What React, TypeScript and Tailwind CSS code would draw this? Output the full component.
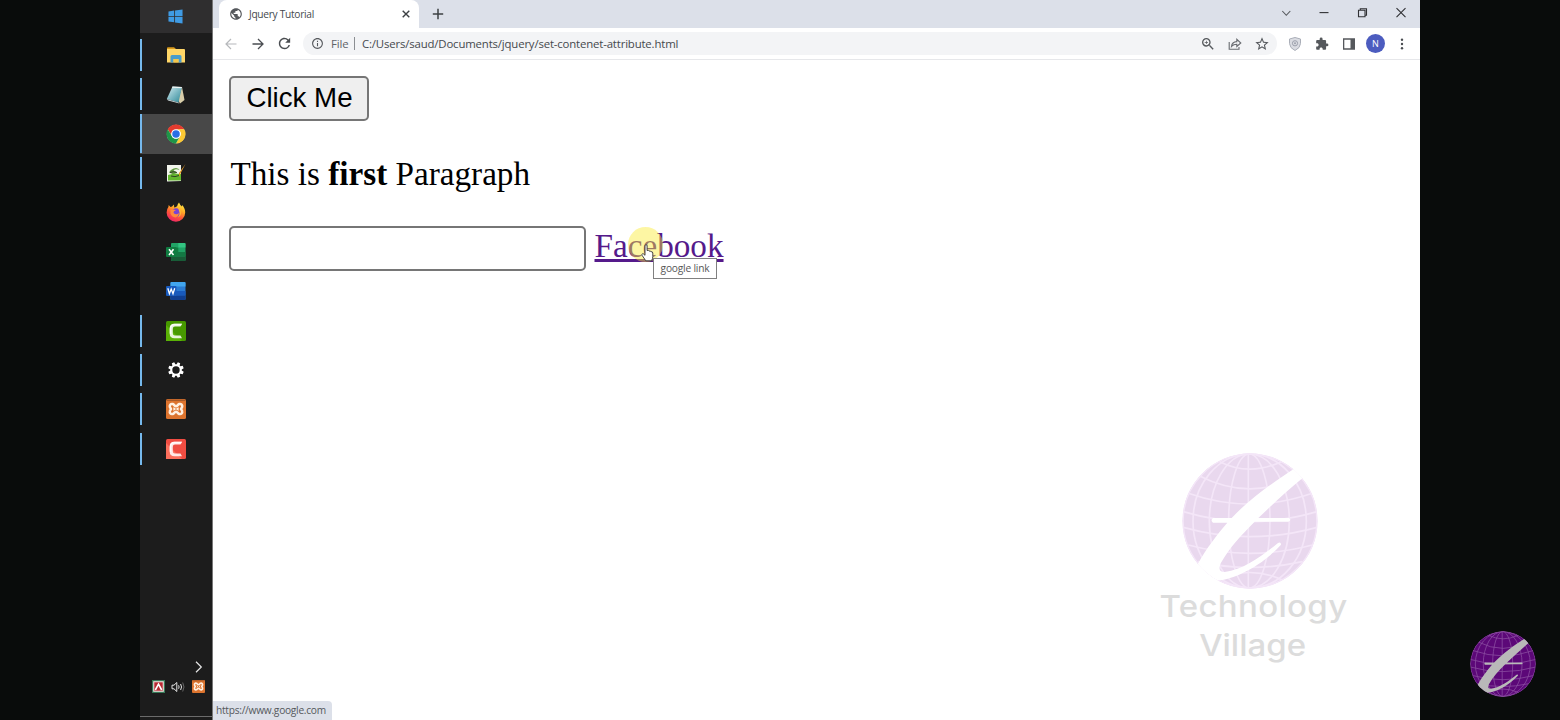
import React from "react";
import { MdZoomIn, MdExtension, MdStarBorder, MdInfoOutline, MdRefresh, MdPublic } from "react-icons/md";

const Windows = () => (
  <svg viewBox="0 0 16 16" className="h-[15px] w-[15px]" fill="#3f9be4">
    <path d="M0.5 2.6 6.6 1.7V7.4H0.5zM7.5 1.5 15.5.4V7.4H7.5zM.5 8.3H6.6V14.2L.5 13.3zM7.5 8.3H15.5V15.5L7.5 14.4z" />
  </svg>
);

const Folder = () => (
  <svg viewBox="0 0 20 20" className="h-5 w-5">
    <path d="M1 3.2Q1 2.2 2 2.2H8L10 4H1z" fill="#d99a1c" />
    <path d="M1 4h17q1 0 1 1v12.5H1z" fill="#ffd667" />
    <path d="M4.500 17.500V11.500q0-1.500 1.500-1.500h8q1.500 0 1.500 1.500v6h-3V14H7.500v3.500z" fill="#4a9ccb" />
    <path d="M7.500 17.500V14h5v3.500z" fill="#f4c64c" />
  </svg>
);

const Notes = () => (
  <svg viewBox="0 0 20 20" className="mt-px h-5 w-5">
    <defs>
      <linearGradient id="notes" x1="0" y1="0" x2="1" y2="1">
        <stop offset="0" stopColor="#d8eef2" />
        <stop offset=".5" stopColor="#7db9c4" />
        <stop offset="1" stopColor="#2d8796" />
      </linearGradient>
    </defs>
    <path d="M16 2 18.500 15 14 18.500 12 15z" fill="#d8cda9" />
    <path d="M6.500 1.500 16 2 12.500 17.500.8 14z" fill="url(#notes)" />
    <path d="M.8 14 12.500 17.500 13.500 18.500 2 15.500z" fill="#c9d5d6" />
    <path d="M6.500 1.500 16 2l-.3 1.300-9.800-.6z" fill="#edf3f2" />
  </svg>
);

const Chrome = () => (
  <svg viewBox="0 0 48 48" className="h-[20px] w-[20px]">
    <circle cx="24" cy="24" r="22" fill="#fff" />
    <path d="M4.100 12.500A23 23 0 0 1 43.900 12.500L24 13.500A11 11 0 0 0 14.500 29.500z" fill="#e33b2e" />
    <path d="M43.900 12.500A23 23 0 0 1 24 47L33.500 29.500A11 11 0 0 0 24 12.500z" fill="#fcc934" />
    <path d="M4.100 12.500A23 23 0 0 0 24 47L33.500 29.500A11 11 0 0 1 14.500 29.500z" fill="#1e9648" />
    <circle cx="24" cy="24" r="11.500" fill="#fff" />
    <circle cx="24" cy="24" r="9" fill="#2a6fe6" />
  </svg>
);

const NotepadPP = () => (
  <svg viewBox="0 0 20 20" className="h-5 w-5">
    <path d="M1 2h14v16L1 18.500z" fill="#f2f4ec" />
    <path d="M2 12q6-2 13-1v6.500H2z" fill="#63b72e" />
    <path d="M3 9.500q2-4 7-4.500 3 .500 3.500 2-4-1.500-6 .500 3 .5 3.500 2.500-3 1.500-4.500 1z" fill="#5f9a3c" />
    <path d="M4 9.500q3-1.500 7 0M5 13q4 1.500 8-.5" stroke="#222" strokeWidth=".8" fill="none" />
    <path d="M19.500 1 15 9.500 13 14 13 10z" fill="#e49b28" />
  </svg>
);

const Firefox = () => (
  <svg viewBox="0 0 20 20" className="-mt-px h-5 w-5">
    <defs>
      <linearGradient id="fox" x1=".8" y1="0" x2=".3" y2="1">
        <stop offset="0" stopColor="#fff04a" />
        <stop offset=".35" stopColor="#ffae26" />
        <stop offset=".65" stopColor="#ff5638" />
        <stop offset="1" stopColor="#ed226a" />
      </linearGradient>
    </defs>
    <path d="M13 .5q1 2.500 2.800 4 .2-1 .2-1.500 3.200 3 3.200 7.500a9.300 9.300 0 0 1-18.600 0Q.600 7 2.400 5l.3-2 1.800 2 1.500-.4L8 2.500l.2 3q2-.2 3-1.500Q11.500 2 13 .5z" fill="url(#fox)" />
    <circle cx="10.200" cy="10.500" r="4.300" fill="#7a42d4" />
    <path d="M4.500 8q3-1 5.500.5-2.500.2-2.500 2 .5 2 3 1.800 1.800-.3 2.500-1.300-.2 3.500-3.500 4.500-4-.500-5-4z" fill="#ff8a3b" />
    <path d="M12 5.500q4 2 3 6.500-.7 3-3 3.500 2-2 1.500-5z" fill="#ffb632" />
  </svg>
);

const Excel = () => (
  <svg viewBox="0 0 20 20" className="h-5 w-5">
    <rect x="5" y="1" width="14.500" height="18" rx="1" fill="#21a366" />
    <path d="M5 5.500h7.300V10H5z" fill="#107c41" />
    <path d="M12.300 1h6.200q1 0 1 1v3.500h-7.200z" fill="#33c481" />
    <path d="M5 10h14.500v4.500H5z" fill="#137843" />
    <path d="M5 14.500h14.500V18q0 1-1 1H6q-1 0-1-1z" fill="#185c37" />
    <rect x="0" y="5" width="10.500" height="10" rx="1" fill="#107c41" />
    <path d="M3 7.300 7.500 12.900M7.500 7.300 3 12.900" stroke="#fff" strokeWidth="1.600" />
  </svg>
);

const Word = () => (
  <svg viewBox="0 0 20 20" className="h-5 w-5">
    <rect x="4.500" y="1" width="15" height="18" rx="1" fill="#2b7cd3" />
    <path d="M5.500 1h13q1 0 1 1v3.500h-15V2q0-1 1-1z" fill="#41a5ee" />
    <path d="M4.500 10h15v4.500h-15z" fill="#185abd" />
    <path d="M4.500 14.500h15V18q0 1-1 1h-13q-1 0-1-1z" fill="#103f91" />
    <rect x="0" y="5" width="10.500" height="10" rx="1" fill="#185abd" />
    <path d="M1.800 7.300 3.400 12.700 5.200 8 7 12.700 8.700 7.300" stroke="#fff" strokeWidth="1.300" fill="none" />
  </svg>
);

const CamGlyph = () => (
  <>
    <path d="M16 2.800 14.500 5.500H9Q6.800 5.500 6.800 7.700v4.600q0 2.200 2.200 2.200h5.500L16 17.200H8.500q-4.800 0-4.800-4.700v-5q0-4.700 4.800-4.700z" fill="#fff" opacity=".85" />
    <path d="M16 2.800H8.500Q3.700 2.800 3.700 7.500v5l1.500 1V8q0-3.500 3.300-3.500h6.700z" fill="#fff" opacity=".8" />
  </>
);

const CamGreen = () => (
  <svg viewBox="0 0 20 20" className="h-5 w-5">
    <rect width="20" height="20" rx="1.500" fill="#479900" />
    <path d="M0 20V4L16 20z" fill="#5ab206" />
    <CamGlyph />
  </svg>
);

const CamRed = () => (
  <svg viewBox="0 0 20 20" className="h-5 w-5">
    <rect width="20" height="20" rx="1.500" fill="#f04d42" />
    <path d="M0 20V4L16 20z" fill="#fb6f5c" />
    <CamGlyph />
  </svg>
);

const TEETH = [0, 45, 90, 135, 180, 225, 270, 315];

const Gear = () => (
  <svg viewBox="0 0 20 20" className="-ml-px h-5 w-5">
    <g transform="rotate(22.5 10 10)">
      {TEETH.map((a) => (
        <path key={a} d="M8.200 5.500 8.700 2.200h2.600L11.800 5.500z" fill="#fff" transform={`rotate(${a} 10 10)`} />
      ))}
    </g>
    <circle cx="10" cy="10" r="4.700" fill="none" stroke="#fff" strokeWidth="2" />
  </svg>
);

const Xampp = ({ small = false }: { small?: boolean }) => (
  <svg viewBox="0 0 20 20" className={small ? "h-[13px] w-[13px]" : "h-5 w-5"}>
    <rect width="20" height="20" rx="1.500" fill="#dd742e" />
    <rect x=".5" y=".5" width="19" height="1.500" rx=".7" fill="#a95a28" />
    <path
      d="M6.800 5C4.500 4.500 3.500 6 3.800 7.600 4 9 5 9.400 5 10s-1 1-1.200 2.400C3.500 14 4.500 15.500 6.800 15 8.200 14.600 8.400 12.800 10 12.800s1.800 1.800 3.200 2.200c2.300.5 3.300-1 3-2.600C16 11 15 10.600 15 10s1-1 1.200-2.400c.3-1.600-.7-3.100-3-2.600C11.800 5.400 11.600 7.200 10 7.200S8.200 5.400 6.800 5z"
      fill="none"
      stroke="#fff0e2"
      strokeWidth="2.500"
    />
    <path d="M7.300 8.800 9 10 7.300 11.200M12.700 8.800 11 10 12.700 11.200" fill="none" stroke="#fff0e2" strokeWidth="1.400" />
  </svg>
);

const ITEMS: { name: string; icon: React.ReactNode; open?: boolean; active?: boolean }[] = [
  { name: "explorer", icon: <Folder />, open: true },
  { name: "notes", icon: <Notes />, open: true },
  { name: "chrome", icon: <Chrome />, open: true, active: true },
  { name: "editor", icon: <NotepadPP />, open: true },
  { name: "firefox", icon: <Firefox /> },
  { name: "excel", icon: <Excel /> },
  { name: "word", icon: <Word /> },
  { name: "camtasia", icon: <CamGreen />, open: true },
  { name: "settings", icon: <Gear />, open: true },
  { name: "xampp", icon: <Xampp />, open: true },
  { name: "recorder", icon: <CamRed />, open: true },
];

function Taskbar() {
  return (
    <aside className="flex w-[73px] shrink-0 flex-col border-r border-[#777] bg-[#1c1c1c]">
      <div className="flex h-[33px] shrink-0 items-center justify-center bg-[#2f2e2f] pr-px">
        <Windows />
      </div>
      <div className="mt-[2.400px] flex flex-col">
        {ITEMS.map((it) => (
          <div key={it.name} className={`flex h-[39.380px] items-center ${it.active ? "bg-[#484848]" : ""}`}>
            <div className={`w-[2px] ${it.active ? "h-[39px]" : "h-8"} ${it.open ? "bg-[#76b9ed]" : ""}`} />
            <div className="flex flex-1 justify-center pr-[2px]">{it.icon}</div>
          </div>
        ))}
      </div>
      <div className="mt-auto flex flex-col pb-[3px]">
        <svg viewBox="0 0 8 12" className="ml-[55px] h-3 w-2" fill="none" stroke="#e6e6e6" strokeWidth="1.200">
          <path d="M1 .8 6.300 6 1 11.200" />
        </svg>
        <div className="mt-[7px] mb-[23px] flex items-center pl-3">
          <svg viewBox="0 0 13 13" className="h-[13px] w-[13px]">
            <rect width="13" height="13" fill="#367a58" />
            <rect x="1.200" y="1.200" width="10.600" height="10.600" fill="#f0dedd" />
            <rect x="2.300" y="2.300" width="8.400" height="8.400" fill="#b82932" />
            <path d="M3.300 10 6.500 4.200 9.700 10" stroke="#fff" strokeWidth="1.600" fill="none" />
          </svg>
          <svg viewBox="0 0 15 12" className="ml-[6px] h-3 w-[15px]" fill="none" stroke="#e6e6e6" strokeWidth="1">
            <path d="M1 4.200h2L5.800 1.500v9L3 7.800H1z" />
            <path d="M7.600 4.300q1 1.700 0 3.400M9.600 3q1.900 3 0 6" />
            <path d="M11.700 1.500q2.600 4.500 0 9" stroke="#666" />
          </svg>
          <div className="ml-[6px]">
            <Xampp small />
          </div>
        </div>
        <div className="h-px bg-[#6b6b6b]" />
      </div>
    </aside>
  );
}

function TabStrip() {
  return (
    <div className="flex h-[28px] shrink-0 bg-[#dce0e9] pl-[6px]">
      <div className="flex w-[200px] items-center rounded-t-lg bg-white pl-[10px] pr-[7px] text-[#45494d]">
        <MdPublic className="h-[14px] w-[14px] text-[#55585c]" />
        <span className="ml-[6px] text-[10.200px] leading-none tracking-[-0.3px]">Jquery Tutorial</span>
        <svg viewBox="0 0 12 12" className="ml-auto h-3 w-3" stroke="#3c4043" strokeWidth="1.400">
          <path d="M2.700 2.700 9.300 9.300M9.300 2.700 2.700 9.300" />
        </svg>
      </div>
      <svg viewBox="0 0 12 12" className="ml-[13px] mt-2 h-3 w-3" stroke="#3c4043" strokeWidth="1.500">
        <path d="M6 .8V11.200M.8 6H11.200" />
      </svg>
      <div className="ml-auto flex items-start gap-[26.300px] pr-[13px] pt-[7px]">
        <svg viewBox="0 0 12 12" className="h-3 w-3" fill="none" stroke="#55585c" strokeWidth="1.100">
          <path d="M2.300 4 6.300 8.300 10.300 4" />
        </svg>
        <svg viewBox="0 0 12 12" className="h-3 w-3" stroke="#303134" strokeWidth="1.100">
          <path d="M1.500 5.600H10.500" />
        </svg>
        <svg viewBox="0 0 12 12" className="h-3 w-3" fill="none" stroke="#303134" strokeWidth="1.100">
          <path d="M1.500 3.200H8V9.800H1.500zM3.300 3V1.700H9.500V8.200H8.200" />
        </svg>
        <svg viewBox="0 0 12 12" className="h-3 w-3" stroke="#303134" strokeWidth="1.100">
          <path d="M1.500 1.200 10.500 10.200M10.500 1.200 1.500 10.200" />
        </svg>
      </div>
    </div>
  );
}

function Toolbar() {
  return (
    <div className="flex h-[32px] shrink-0 items-center border-b border-[#e6e7ea] bg-white pl-[12px] pr-[12px]">
      <svg viewBox="0 0 12 12" className="h-3 w-3" fill="none" stroke="#b6b8bb" strokeWidth="1.200">
        <path d="M11.500 6H1M6 1 1 6 6 11" />
      </svg>
      <svg viewBox="0 0 12 12" className="ml-[15px] h-3 w-3" fill="none" stroke="#4a4d51" strokeWidth="1.300">
        <path d="M.5 6H11M6 1 11 6 6 11" />
      </svg>
      <MdRefresh className="ml-[12px] h-[17px] w-[17px] text-[#4a4d51]" />
      <div className="ml-[10px] flex h-[23px] w-[974px] items-center rounded-full bg-[#f3f4f6] pl-[8px] pr-[7px] text-[11.400px] leading-none">
        <MdInfoOutline className="h-[13px] w-[13px] text-[#55585c]" />
        <span className="ml-[7px] w-[19px] tracking-[-0.1px] text-[#5f6368]">File</span>
        <span className="ml-[4px] mr-[7px] h-[13px] w-px bg-[#8b8e92]" />
        <span className="tracking-[-0.165px] whitespace-nowrap text-[#45494d]">
          C:/Users/saud/Documents/jquery/set-contenet-attribute.html
        </span>
        <MdZoomIn className="ml-auto h-[16px] w-[16px] text-[#55585c]" />
        <svg viewBox="0 0 14 14" className="ml-[12px] h-[14px] w-[14px]" fill="none" stroke="#686b70" strokeWidth="1.100">
          <path d="M1.200 5V12.300H11V10" />
          <path d="M3.500 9.500Q4 4.800 8.800 4.600V2.300L12.800 6 8.800 9.500V7.200Q5.500 7.200 3.500 9.500z" />
        </svg>
        <MdStarBorder className="ml-[12px] h-[16px] w-[16px] text-[#55585c]" />
      </div>
      <svg viewBox="0 0 12 14" className="ml-[12px] h-[14px] w-3">
        <path d="M6 .5 11.500 2V6.500Q11.300 11 6 13.500.7 11 .5 6.500V2z" fill="#dadce2" stroke="#aaaeb8" />
        <circle cx="6" cy="6.300" r="2.600" fill="none" stroke="#9da1ad" />
        <circle cx="6" cy="6.300" r="1" fill="#9da1ad" />
      </svg>
      <MdExtension className="ml-[14px] h-[14px] w-[14px] text-[#55585c]" />
      <svg viewBox="0 0 12 12" className="ml-[13.500px] h-3 w-3" fill="#55585c">
        <path d="M0 .3h12v11.400H0zM1.300 1.700v8.600H7.500V1.700z" fillRule="evenodd" />
      </svg>
      <span className="ml-[11.500px] flex h-[19px] w-[19px] items-center justify-center rounded-full bg-[#4c5cbf] text-[9px] leading-none text-white">
        N
      </span>
      <svg viewBox="0 0 4 14" className="ml-auto mr-[4px] h-[14px] w-1" fill="#4a4d51">
        <circle cx="2" cy="2.800" r="1.200" />
        <circle cx="2" cy="7" r="1.200" />
        <circle cx="2" cy="11.200" r="1.200" />
      </svg>
    </div>
  );
}

function Globe({ id, fill, line, mark, className }: { id: string; fill: string; line: string; mark: string; className: string }) {
  return (
    <svg viewBox="97 39 408 408" className={className}>
      <clipPath id={id}>
        <circle cx="301" cy="243" r="203" />
      </clipPath>
      <g clipPath={`url(#${id})`}>
        <circle cx="301" cy="243" r="203" fill={fill} />
        <g fill="none" stroke={line} strokeWidth="5">
          <circle cx="301" cy="243" r="201" />
          <ellipse cx="299" cy="243" rx="62" ry="201" />
          <ellipse cx="299" cy="243" rx="120" ry="201" />
          <ellipse cx="300" cy="243" rx="170" ry="201" />
          <path d="M296 40V446" />
          <path d="M210 65Q300 110 395 65M150 108Q300 185 455 108M116 160Q300 225 488 160M101 215Q300 275 502 215M101 262Q300 318 502 262M116 315Q300 365 488 315M145 365Q300 400 458 365M205 420Q300 375 398 420" />
        </g>
        <path
          d="M431 88C370 128 300 176 246 234H190Q181 241 190 248H233C205 280 170 325 143 374L125 410 195 455 206 421C255 418 340 375 394 314Q394 305 385 309C340 345 285 388 225 396 208 396 206 385 214 368 240 322 275 285 315 245H416Q427 240 418 234H326C370 192 412 153 458 115L472 95 445 72z"
          fill={mark}
        />
      </g>
    </svg>
  );
}

function Page() {
  return (
    <main className="relative flex flex-1 flex-col items-start bg-white pl-[16px] pt-[16px] font-['Liberation_Serif',serif] text-[33.200px] leading-[38px] text-black">
      <button className="flex h-[45px] w-[140px] items-center justify-center rounded-[5px] border-2 border-[#767676] bg-[#efefef] pb-[2px] pl-[1px] font-['Liberation_Sans',sans-serif] text-[27.700px] leading-none whitespace-nowrap">
        Click Me
      </button>
      <p className="mt-[34px] ml-[1.500px]">
        This is <b>first</b> Paragraph
      </p>
      <div className="mt-[33px] flex">
        <input className="h-[45px] w-[357px] rounded-[5px] border-2 border-[#767676] bg-white" />
        <div className="relative ml-[8.500px] pt-px">
          <a className="text-[#551a8b] underline decoration-[3px] underline-offset-[2px]">Facebook</a>
          <div className="absolute left-[33px] top-[1px] h-[35px] w-[35px] rounded-full bg-[#fbec32]/45" />
          <div className="absolute left-[58.500px] top-[32px] flex h-[21px] w-[64px] items-center justify-center border border-[#808080] bg-white font-['Open_Sans',sans-serif] text-[10.200px] leading-none tracking-[-0.200px] whitespace-nowrap text-[#575757]">
            google link
          </div>
          <svg viewBox="0 0 14 18" className="absolute left-[46.500px] top-[18px] h-[18px] w-[14px]">
            <path
              d="M4 1.800Q4 .7 5 .7T6.100 1.800V6.500Q7.500 5.900 8 7.100 9.300 6.500 9.900 7.700 11.600 7.300 11.800 9V12.500Q11.800 14.500 10.500 16.800H4.800L1.200 11.500Q.5 10.200 1.500 9.700 2.500 9.500 4 11.300z"
              fill="#fff"
              stroke="#333"
              strokeWidth=".9"
            />
          </svg>
        </div>
      </div>
      <div className="absolute left-[934px] top-[393px] flex w-[212px] flex-col items-center font-['Inter',sans-serif] text-[30px] leading-[38.500px] font-medium text-[#dcdcdc]">
        <Globe id="globe-light" fill="#e9d8ee" line="#f4e6f8" mark="#ffffff" className="-ml-[6px] h-[136px] w-[136px]" />
        <span className="-mt-[2px] scale-x-[1.1] tracking-[0.300px]">Technology</span>
        <span className="scale-x-[1.1]">Village</span>
      </div>
      <div className="absolute bottom-0 left-0 flex h-[19px] w-[119px] items-center rounded-tr-[4px] bg-[#dce0e9] pl-[3px] font-['Open_Sans',sans-serif] text-[10.200px] leading-none tracking-[-0.270px] whitespace-nowrap text-[#55585c]">
        https://www.google.com
      </div>
    </main>
  );
}

export default function App() {
  return (
    <div className="flex h-[720px] w-[1560px] overflow-hidden bg-[#090c0b] font-['Open_Sans',sans-serif]">
      <div className="w-[140px] shrink-0" />
      <Taskbar />
      <div className="flex w-[1207px] shrink-0 flex-col">
        <TabStrip />
        <Toolbar />
        <Page />
      </div>
      <div className="flex w-[140px] shrink-0 items-end pl-[50px] pb-[23px]">
        <Globe id="globe-dark" fill="#5c0878" line="#8a4ca0" mark="#b9b9b9" className="h-[66px] w-[66px]" />
      </div>
    </div>
  );
}
